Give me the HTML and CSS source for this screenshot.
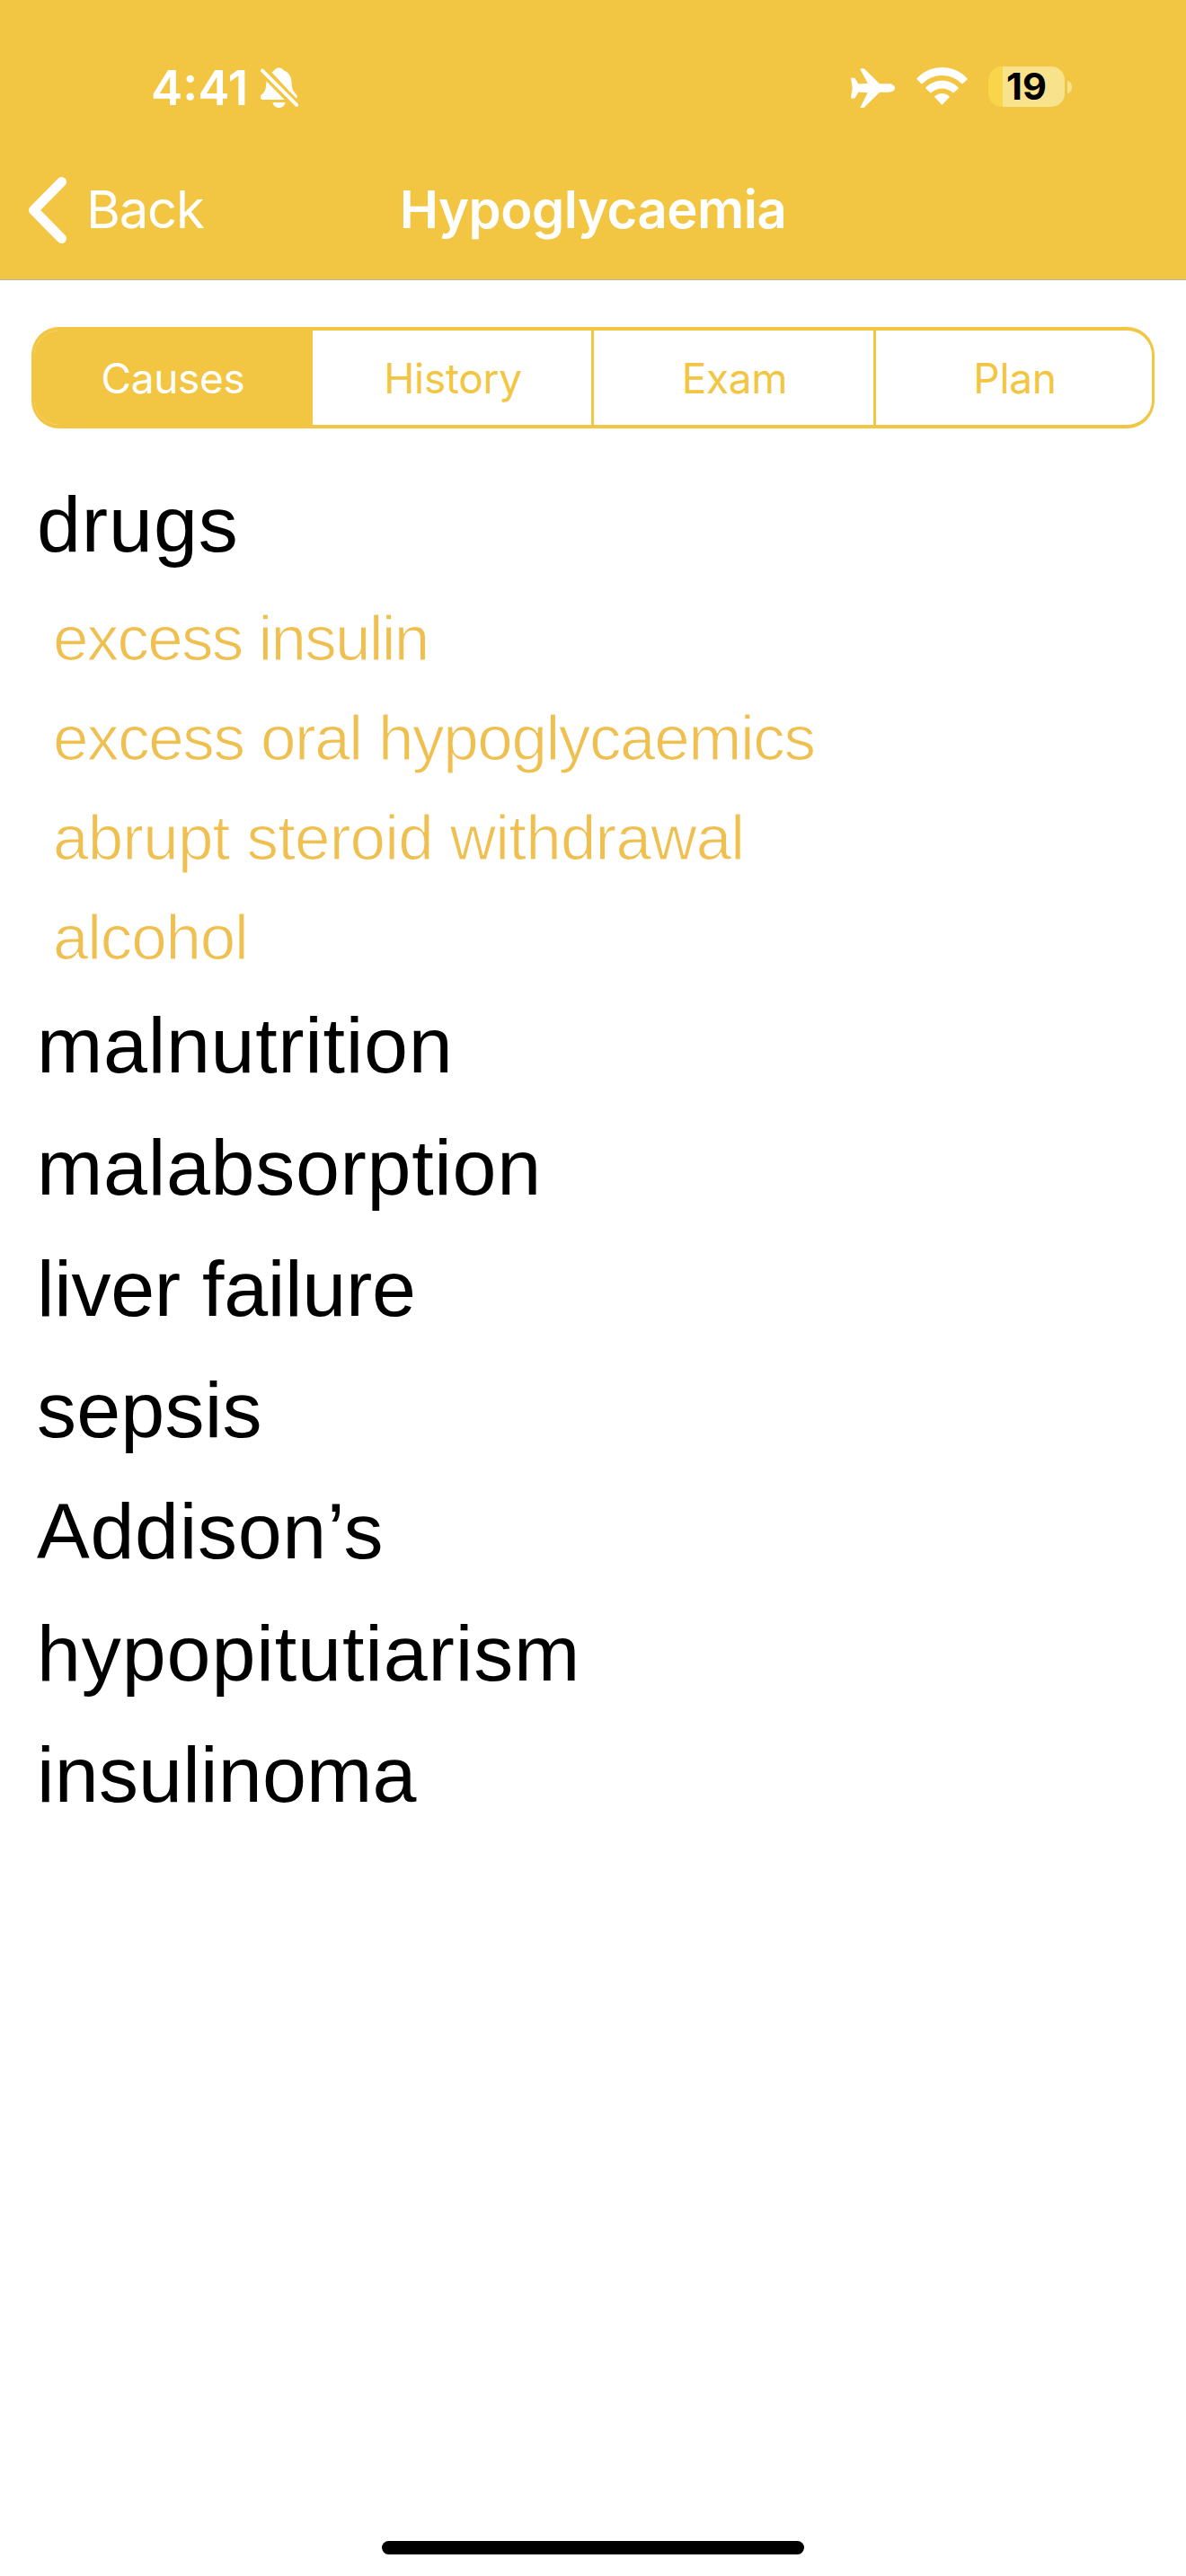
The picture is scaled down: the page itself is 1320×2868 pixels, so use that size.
FILE: index.html
```html
<!DOCTYPE html>
<html lang="en">
<head>
<meta charset="utf-8">
<title>Hypoglycaemia</title>
<link rel="stylesheet" href="styles.css">
</head>
<body>
<div class="screen">
  <header class="header">
    <div class="status">
      <div class="status-left">
        <span class="time">4:41</span>
        <svg class="bell" viewBox="0 0 42 46" width="42" height="46">
          <path fill="#fff" d="M12.5 5.6C14 4.2 15 4 15.8 2.6C17 1 18.600 .4 20.500 .4C22.800 .4 24.600 1.300 25.800 3.400C31 5 34.300 10 34.500 16C34.700 23 36 26.200 39.500 29.800C41 31.500 41.200 33.500 39.700 35Z"/>
          <path fill="#fff" d="M6.300 15.200L26.800 36H3C1 36 0 35 0 33.500C0 31.500 1 30.500 2.500 29C5.500 26 6.300 23 6.300 15.200Z"/>
          <path fill="#fff" d="M13.500 39H27.500C27 42.500 24.200 45 20.500 45S14 42.500 13.500 39Z"/>
          <path fill="none" stroke="#f2c642" stroke-width="9" d="M4 5.500L40 41"/>
          <path fill="none" stroke="#fff" stroke-width="4" stroke-linecap="round" d="M2 3.600L40.200 41.800"/>
        </svg>
      </div>
      <div class="status-right">
        <svg class="plane" viewBox="0 0 49 44" width="49" height="44">
          <path fill="#fff" d="M10.500 1.500Q10.500 .3 11.800 .3H13.500Q15 .3 16 1.500L32 17.300H42C46 17.300 49 19.400 49 22S46 26.700 42 26.700H32L15.500 43Q14.800 44 13.500 44H10.300L18.800 27.200L8.500 26.500L5 32.500Q4.500 33.400 3.500 33.400H0L1.700 22L0 10.800H3.300Q4.500 10.800 5 11.700L8.500 17.400L18.800 16.800Z"/>
        </svg>
        <svg class="wifi" viewBox="0 0 57 42" width="57" height="42">
          <path fill="#fff" d="M.7 12C15.500-4 41.500-4 56.300 12Q57 12.800 56.300 13.600L51.800 18Q51 18.700 50.200 18C38 6 19 6 6.800 18Q6 18.700 5.200 18L.7 13.600Q0 12.800 .7 12Z"/>
          <path fill="#fff" d="M10.600 22.200C20.500 12.200 36.500 12.200 46.400 22.200Q47.200 23 46.400 23.800L41.800 28Q41 28.700 40.200 28C33.500 22 23.500 22 16.800 28Q16 28.700 15.200 28L10.600 23.800Q9.800 23 10.600 22.200Z"/>
          <path fill="#fff" d="M20.600 32C25.200 28 31.800 28 36.400 32Q37.200 32.800 36.400 33.600L29.300 41Q28.500 41.800 27.700 41L20.600 33.600Q19.800 32.800 20.600 32Z"/>
        </svg>
        <div class="battery">
          <div class="battery-body"><span class="battery-text">19</span></div>
          <div class="battery-cap"></div>
        </div>
      </div>
    </div>
    <nav class="nav">
      <a class="back">
        <svg viewBox="0 0 44 76" width="44" height="76"><path fill="none" stroke="#fff" stroke-width="11" stroke-linecap="round" stroke-linejoin="round" d="M37.500 6.500L6.500 38L37.500 69.500"/></svg>
        <span class="back-label">Back</span>
      </a>
      <h1 class="title">Hypoglycaemia</h1>
    </nav>
  </header>
  <main class="content">
    <div class="segments">
      <div class="segment selected">Causes</div>
      <div class="segment">History</div>
      <div class="segment">Exam</div>
      <div class="segment">Plan</div>
    </div>
    <ul class="causes">
      <li class="loose">drugs
        <ul class="details">
          <li>excess insulin</li>
          <li>excess oral hypoglycaemics</li>
          <li>abrupt steroid withdrawal</li>
          <li>alcohol</li>
        </ul>
      </li>
      <li class="medium">malnutrition</li>
      <li class="medium">malabsorption</li>
      <li class="tight">liver failure</li>
      <li>sepsis</li>
      <li class="medium">Addison’s</li>
      <li class="loose">hypopitutiarism</li>
      <li>insulinoma</li>
    </ul>
  </main>
  <footer class="footer"><div class="home-bar"></div></footer>
</div>
</body>
</html>
```
FILE: styles.css
```css
* { box-sizing: border-box; }
body { margin: 0; background: #fff; }

.screen {
  display: flex;
  flex-direction: column;
  width: 1320px;
  height: 2868px;
  font-family: Inter, "Liberation Sans", sans-serif;
}

/* Header */
.header {
  height: 312px;
  background: #f2c642;
  border-bottom: 1px solid #b5b3ac;
  color: #fff;
}
.status {
  display: flex;
  justify-content: space-between;
  height: 170px;
  padding: 67px 127px 0 168px;
}
.status-left, .status-right { display: flex; align-items: flex-start; }
.time {
  width: 122px;
  font-size: 53px;
  line-height: 62px;
  font-weight: 600;
  white-space: nowrap;
}
.bell { margin-top: 8px; }
.plane { margin-top: 9px; }
.wifi { margin: 8px 23px 0 24px; }
.battery { display: flex; align-items: center; gap: 3px; margin-top: 7px; }
.battery-body {
  width: 85px;
  height: 45px;
  border-radius: 15px;
  background: linear-gradient(to right, #f7d64b 16px, #f8e28b 16px);
  text-align: center;
}
.battery-text {
  color: #000;
  font-size: 41.5px;
  line-height: 45px;
  font-weight: 700;
}
.battery-cap {
  width: 5px;
  height: 14px;
  border-radius: 0 5px 5px 0 / 0 7px 7px 0;
  background: #f8e28b;
}

.nav {
  display: grid;
  grid-template-columns: 1fr auto 1fr;
  align-items: center;
  height: 128px;
}
.back { display: flex; align-items: center; gap: 21px; padding-left: 31px; }
.back-label {
  padding-bottom: 2px;
  font-size: 58px;
  line-height: 70px;
  font-weight: 400;
  letter-spacing: -1.2px;
}
.title {
  margin: 0;
  padding-bottom: 2px;
  font-size: 58px;
  line-height: 70px;
  font-weight: 600;
  letter-spacing: -0.5px;
}

/* Segmented control */
.content { flex: 1; padding: 52px 35px 0; }
.segments {
  display: grid;
  grid-template-columns: 307px 313px 314px 1fr;
  height: 113px;
  border: 4px solid #f2c642;
  border-left-width: 3px;
  border-right-width: 3px;
  border-radius: 31px;
  overflow: hidden;
  color: #f2c642;
}
.segment {
  display: flex;
  align-items: center;
  justify-content: center;
  border-left: 3px solid #f2c642;
  padding-left: 2px;
  font-size: 46px;
  font-weight: 400;
  letter-spacing: -0.3px;
}
.segment:first-child { border-left: 0; }
.selected { background: #f2c642; color: #fff; }

/* Cause list */
.causes, .details { margin: 0; padding: 0; list-style: none; }
.causes {
  padding: 39px 0 0 6px;
  font: 88px/135.3px "Liberation Sans", Arial, sans-serif;
  letter-spacing: 0.2px;
  color: #000;
}
.causes .loose { letter-spacing: 0.9px; }
.causes .medium { letter-spacing: 0.7px; }
.causes .tight { letter-spacing: -0.3px; }
.details {
  margin: 4px 0 -3px;
  padding-left: 18px;
  font-size: 71px;
  line-height: 111px;
  letter-spacing: -1.4px;
  color: #efbf50;
  /* a background-coloured outline thins the strokes to a light weight */
  -webkit-text-stroke: 1.2px #fff;
}
.details li:nth-child(1) { letter-spacing: -1.75px; }
.details li:nth-child(3) { letter-spacing: -0.8px; }
.details li:nth-child(4) { letter-spacing: -1.2px; }

/* Home indicator */
.footer { display: flex; justify-content: center; height: 39px; }
.home-bar { width: 470px; height: 15px; border-radius: 8px; background: #000; }
```
